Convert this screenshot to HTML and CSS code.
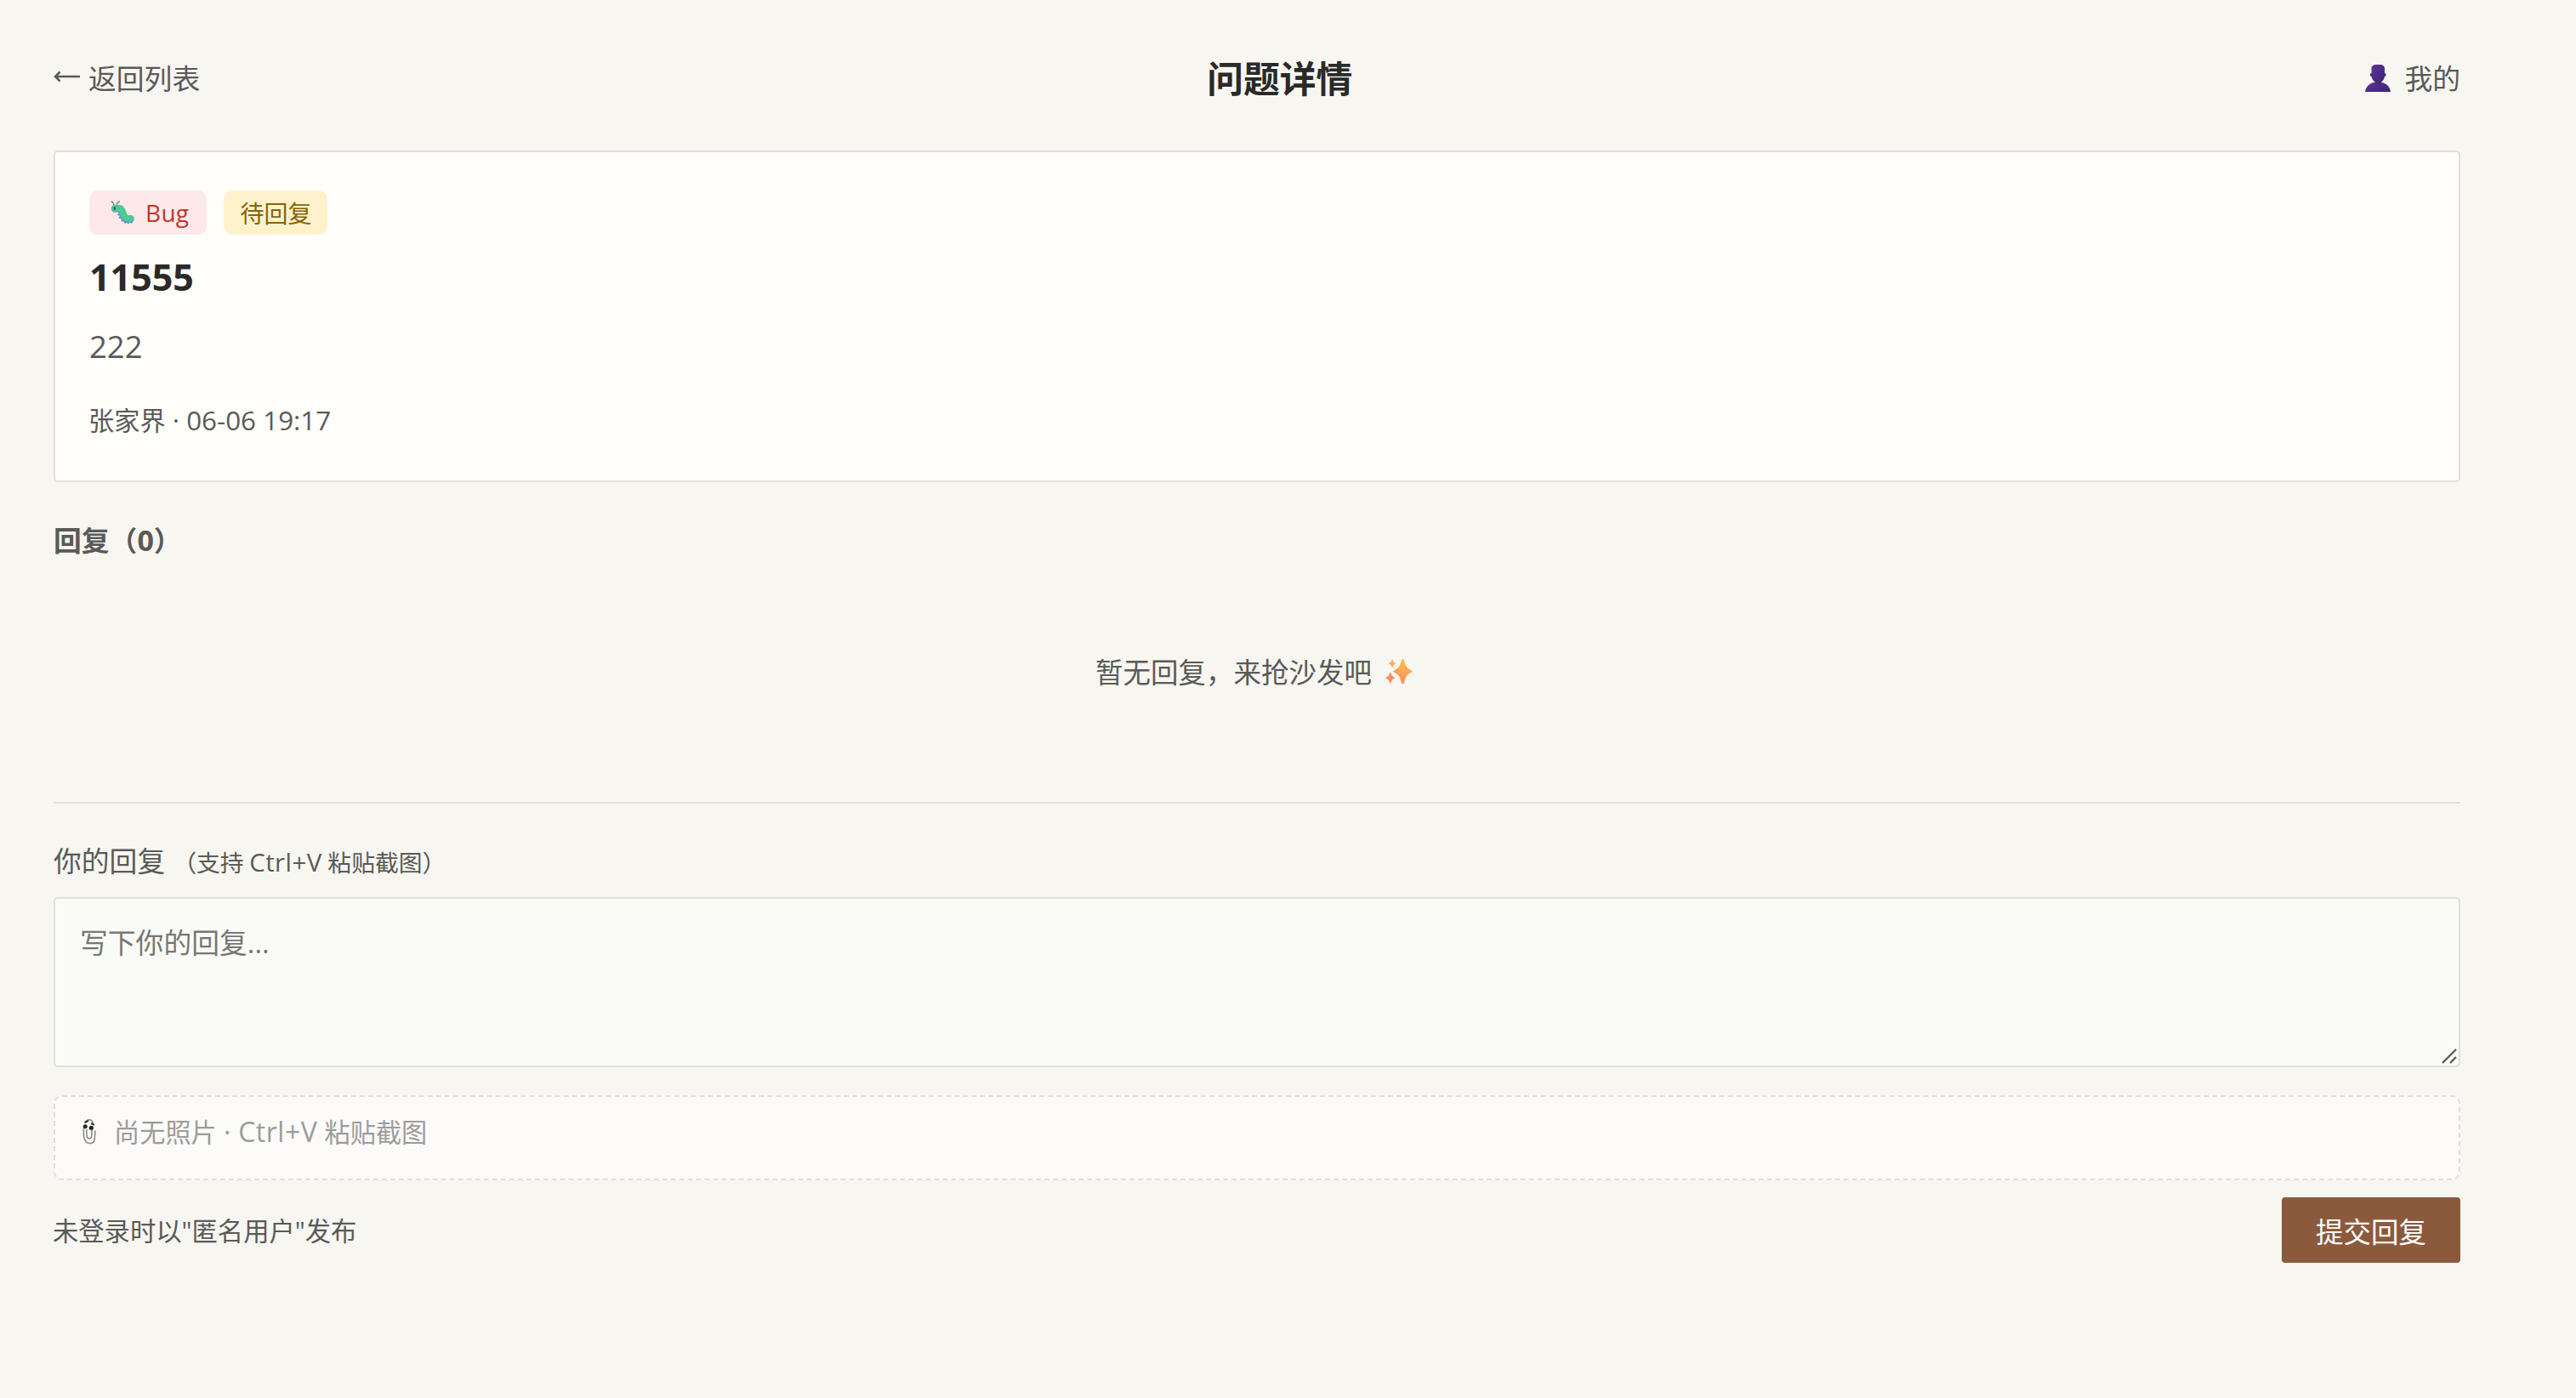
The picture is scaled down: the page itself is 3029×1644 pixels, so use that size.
FILE: index.html
```html
<!DOCTYPE html>
<html lang="zh-CN">
<head>
  <meta charset="UTF-8">
  <title>问题详情</title>
  <link rel="stylesheet" href="styles.css">
</head>
<body>
  <div class="page">
    <header class="header">
      <a class="back-link" href="#"><svg class="icon-arrow" viewBox="0 0 32 14"><path d="M1.500 7H31M7.500 1.500L2 7l5.500 5.500" fill="none" stroke="#5a5a58" stroke-width="2.600"/></svg>返回列表</a>
      <h1 class="title">问题详情</h1>
      <a class="my-link" href="#">
        <svg class="icon-user" viewBox="0 0 30 32">
          <defs>
            <linearGradient id="userFill" x1="0" y1="0" x2="1" y2="1">
              <stop offset="0" stop-color="#5b3599"/>
              <stop offset="1" stop-color="#3c2170"/>
            </linearGradient>
          </defs>
          <path d="M0 32C1 25 6 21.500 12 20.500h6c6 1 11 4.500 12 11.500z" fill="url(#userFill)"/>
          <circle cx="7.800" cy="12" r="2" fill="#3b2170"/>
          <circle cx="22.600" cy="12" r="2" fill="#3b2170"/>
          <path d="M7.500 4.500C7.500 1.500 10 0 13 0h4.500C20.500 0 23 1.500 23 4.500v8c0 4-2 7-4.500 8.500v1.500q-3 2-6 0V21C9.500 19.500 7.500 16.500 7.500 12.500z" fill="url(#userFill)"/>
        </svg>
        <span>我的</span>
      </a>
    </header>

    <section class="card">
      <div class="tags">
        <span class="tag tag-bug">
          <svg class="icon-bug" viewBox="0 0 28 28">
            <path d="M4 6.500C4 3 3 1.500.8 1M7 6.500C7 3 8.500 1 11 1" fill="none" stroke="#3f8f83" stroke-width="1.300"/>
            <path d="M10 16l-1.500.8M11.500 19.500l-1.500.8M14 22.500l-1 1.500M17.500 24.500l-.5 2M21 25v2M24.500 24.500l.3 2" stroke="#5878b8" stroke-width="1.800"/>
            <path d="M5 9.500h6c3 1 2 8 6 11.500q2.500 1.500 6.500.5" fill="none" stroke="#5f9fc4" stroke-width="8.500" stroke-linecap="round" stroke-linejoin="round"/>
            <path d="M5 8.800h6c4 1 3 7.500 7 11.200q2 1.300 5.500.7" fill="none" stroke="#4bcb96" stroke-width="7.500" stroke-linecap="round" stroke-linejoin="round"/>
            <ellipse cx="4.800" cy="9" rx="1.200" ry="1.900" fill="#27504c"/>
          </svg>
          Bug
        </span>
        <span class="tag tag-status">待回复</span>
      </div>
      <h2 class="issue-title">11555</h2>
      <p class="issue-content">222</p>
      <p class="issue-meta">张家界<span class="time"> · 06-06 19:17</span></p>
    </section>

    <h3 class="replies-title">回复（<span class="count">0</span>）</h3>
    <div class="empty">
      <span>暂无回复，来抢沙发吧</span>
      <svg class="icon-sparkles" viewBox="0 0 32 30">
        <defs>
          <linearGradient id="sparkFill" x1="0.600" y1="0" x2="0.300" y2="1">
            <stop offset="0" stop-color="#fbc04a"/>
            <stop offset="1" stop-color="#f98b62"/>
          </linearGradient>
        </defs>
        <path d="M20.500 0q1.300 0 1.700 1.500c1.300 6 3 9.500 8.300 11.700q2.500 1.300 0 2.600c-5.300 2.200-7 6-8.300 12q-.4 1.500-1.700 1.500t-1.700-1.500c-1.300-6-3-9.800-8.300-12q-2.500-1.300 0-2.600c5.300-2.200 7-5.700 8.300-11.700q.4-1.500 1.700-1.500z" fill="url(#sparkFill)"/>
        <path d="M8 .5q.7 3.700 4 4.700-3.300 1-4 4.700-.7-3.700-4-4.700 3.300-1 4-4.700z" fill="#f9ad58" stroke="#f9ad58" stroke-width=".6"/>
        <path d="M5.800 16q1 5 5.200 6.200-4.200 1.200-5.200 6.200-1-5-5.200-6.200 4.200-1.200 5.200-6.200z" fill="#fa9062" stroke="#fa9062" stroke-width="1"/>
      </svg>
    </div>

    <form class="reply-form">
      <label class="reply-label" for="reply">你的回复<span class="hint">（支持<span class="keys"> Ctrl+V </span>粘贴截图）</span></label>
      <div class="textarea-wrap">
        <textarea class="reply-input" id="reply" placeholder="写下你的回复..."></textarea>
        <svg class="resize-grip" viewBox="0 0 18 18"><path d="M1 17L17 1M10 17l7-7" fill="none" stroke="#5a5a5a" stroke-width="2.400"/></svg>
      </div>
      <div class="photos">
        <svg class="icon-clip" viewBox="0 0 16 30">
          <path d="M3 5C5-.5 11-.5 12.500 5M1.500 11C1 18 1 28 8.500 28.500S14 21 15 13.500M4.800 12c0 5-.3 11 3.200 11s3-5 3-11" fill="none" stroke="#8b8b89" stroke-width="1.600"/>
          <path d="M2.500 4L7 2M10 5l4 1.800" stroke="#333" stroke-width="2"/>
          <circle cx="3.200" cy="8.800" r="2.500" fill="#252525"/>
          <circle cx="10.300" cy="10.300" r="2.600" fill="#252525"/>
        </svg>
        <span class="photos-text">尚无照片<span class="keys"> · Ctrl+V </span>粘贴截图</span>
      </div>
      <div class="form-footer">
        <span class="anon-note">未登录时以"匿名用户"发布</span>
        <button class="submit-btn" type="submit">提交回复</button>
      </div>
    </form>
  </div>
</body>
</html>
```
FILE: styles.css
```css
* {
  box-sizing: border-box;
}
body {
  margin: 0;
  background-color: #f7f6f1;
  color: #5a5a58;
  font-family: 'Open Sans', 'Noto Sans CJK SC', sans-serif;
  font-size: 32.5px;
}
h1, h2, h3, p {
  margin: 0;
}
svg {
  flex: none;
}
.page {
  width: 2956px;
  padding: 60px 63px 0;
}
.header {
  display: flex;
  justify-content: space-between;
  align-items: center;
  height: 62px;
  margin-bottom: 55px;
}
.back-link,
.my-link {
  display: flex;
  align-items: center;
  color: #5a5a58;
  font-size: 32.8px;
  text-decoration: none;
}
.back-link {
  gap: 9px;
}
.icon-arrow {
  width: 32px;
  height: 14px;
  margin-top: -2px;
}
.my-link {
  gap: 16px;
}
.icon-user {
  width: 30px;
  height: 32px;
  margin-top: 2px;
}
.title {
  margin: -1px 7px 0 0;
  font-size: 42.8px;
  font-weight: 700;
  color: #2a2a2a;
}
.card {
  height: 390px;
  padding: 45px 40px;
  background-color: #fffefa;
  border: 2px solid #e1e0d8;
  border-radius: 5px;
}
.tags {
  display: flex;
  gap: 20px;
}
.tag {
  display: flex;
  align-items: center;
  height: 52px;
  border-radius: 10px;
  font-size: 28px;
}
.tag-bug {
  gap: 13px;
  padding: 0 21px 0 25px;
  background-color: #fde8ea;
  color: #c0392b;
  letter-spacing: 0.3px;
}
.icon-bug {
  width: 28px;
  height: 28px;
}
.tag-status {
  padding: 0 19px;
  background-color: #fdf2cc;
  color: #856404;
}
.issue-title {
  margin-top: 20px;
  font-size: 43px;
  line-height: 60px;
  color: #2a2a2a;
}
.issue-content {
  margin-top: 21px;
  font-size: 36.5px;
  line-height: 60px;
}
.issue-meta {
  margin: 27px 0 0 -1px;
  font-size: 30.2px;
  line-height: 60px;
}
.time {
  font-size: 31.4px;
}
.replies-title {
  margin-top: 38px;
  font-size: 32.8px;
  line-height: 60px;
}
.count {
  font-size: 34px;
}
.empty {
  display: flex;
  justify-content: center;
  align-items: center;
  gap: 16px;
  height: 60px;
  margin: 93px 7px 124px 0;
}
.icon-sparkles {
  width: 32px;
  height: 30px;
  margin-top: 2px;
}
.reply-form {
  border-top: 2px solid #e1e0d8;
  padding-top: 38px;
}
.reply-label {
  display: block;
  height: 72px;
  font-size: 32.8px;
  line-height: 60px;
}
.hint {
  margin-left: 9px;
  font-size: 27.8px;
}
.keys {
  font-size: 1.06em;
  letter-spacing: 0.015em;
  word-spacing: -1.5px;
}
.textarea-wrap {
  position: relative;
  height: 200px;
}
.reply-input {
  display: block;
  width: 100%;
  height: 100%;
  padding: 22px 29px;
  background-color: #fafbf6;
  border: 2px solid #e1e0d8;
  border-radius: 5px;
  font: inherit;
  font-size: 32.8px;
  line-height: 60px;
  resize: none;
}
.reply-input::placeholder {
  color: #777775;
}
.resize-grip {
  position: absolute;
  right: 4px;
  bottom: 4px;
  width: 18px;
  height: 18px;
}
.photos {
  display: flex;
  align-items: center;
  gap: 21px;
  height: 100px;
  margin: 33px 0 20px;
  padding: 0 32px 15px;
  background-color: #fcfbf9;
  border: 2px dashed #e1e0d8;
  border-radius: 10px;
  font-size: 30.2px;
  color: #9c9c9a;
}
.photos-text {
  margin-top: -1px;
}
.photos-text .keys {
  word-spacing: -0.5px;
}
.icon-clip {
  width: 16px;
  height: 30px;
}
.form-footer {
  display: flex;
  justify-content: space-between;
  align-items: center;
}
.anon-note {
  margin: -2px 0 0 -1px;
  font-size: 30.3px;
}
.submit-btn {
  width: 210px;
  height: 77px;
  padding: 0;
  background-color: #8b5a3c;
  border: none;
  border-radius: 4px;
  color: #fff;
  font: inherit;
}
```
